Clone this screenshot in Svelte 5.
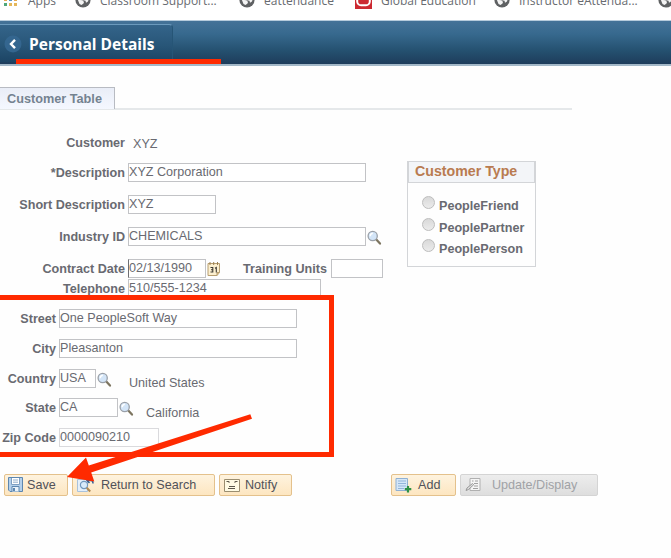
<script>
  const bookmarks = [
    { icon: 'globe', label: 'Classroom Support...', w: 164 },
    { icon: 'globe', label: 'eattendance', w: 116 },
    { icon: 'oracle', label: 'Global Education', w: 139 },
    { icon: 'globe', label: 'Instructor eAttenda...', w: 164 },
    { icon: 'globe', label: '', w: 20 }
  ];
  const details = [
    { label: '*Description', value: 'XYZ Corporation', w: 238, h: 32 },
    { label: 'Short Description', value: 'XYZ', w: 88, h: 32 },
    { label: 'Industry ID', value: 'CHEMICALS', w: 238, h: 32, look: true },
    { label: 'Contract Date', value: '02/13/1990', w: 78, h: 20, date: true },
    { label: 'Telephone', value: '510/555-1234', w: 193, h: 30, tight: true }
  ];
  const address = [
    { label: 'Street', value: 'One PeopleSoft Way', w: 238 },
    { label: 'City', value: 'Pleasanton', w: 238 },
    { label: 'Country', value: 'USA', w: 37, look: true, note: 'United States' },
    { label: 'State', value: 'CA', w: 59, look: true, note: 'California', wide: true },
    { label: 'Zip Code', value: '0000090210', w: 100, soft: true }
  ];
  const types = ['PeopleFriend', 'PeoplePartner', 'PeoplePerson'];
</script>

{#snippet lookup()}
  <svg class="look" width="15" height="16" viewBox="0 0 15 16">
    <path d="M9.300 9.500 13 13.600" stroke="#7d7560" stroke-width="2.200" stroke-linecap="round" />
    <circle cx="5.700" cy="6" r="4.600" fill="#d3e5f8" stroke="#9aa0a8" stroke-width="1.300" />
    <path d="M3.200 6.200A3 3 0 0 1 5.800 3.200" fill="none" stroke="#fff" stroke-width="1.400" />
  </svg>
{/snippet}

<main>
  <nav class="bookmarks">
    <div class="mark apps">
      <svg width="16" height="16" viewBox="0 0 16 16">
        <path fill="#e6a84e" d="M1 0h3v3H1zM1 6h3v3H1zM11 6h3v3h-3z" />
        <path fill="#4fa77a" d="M6 1h3v3H6zM1 11h3v3H1z" />
        <path fill="#5795cb" d="M11 1h3v3h-3zM6 6h3v3H6z" />
        <path fill="#e5b759" d="M6 11h3v3H6zM11 11h3v3h-3z" />
      </svg>
      <span>Apps</span>
    </div>
    {#each bookmarks as b}
      <div class="mark" style:width="{b.w}px">
        {#if b.icon === 'globe'}
          <svg width="16" height="16" viewBox="0 0 16 16">
            <circle cx="8" cy="8" r="7.600" fill="#5f6163" />
            <path d="M2 5.500 5 8l2.500.3L9 10l-.5 1.500L6.500 13 4.500 12l-1-2.500zM7.500 6l3-1.500 3.300 2.300-.8 2.700-2 1.300-.5-2-2.500-.6z" fill="#f4f4f4" />
          </svg>
        {:else}
          <svg width="17" height="17" viewBox="0 0 17 17">
            <rect width="17" height="17" fill="#cc2931" />
            <rect x="2.200" y="4.200" width="12.600" height="9" rx="3.800" fill="none" stroke="#fff" stroke-width="2" />
          </svg>
        {/if}
        <span>{b.label}</span>
      </div>
    {/each}
  </nav>

  <header>
    <div class="crumb">
      <svg width="18" height="18" viewBox="0 0 18 18">
        <circle cx="9" cy="9" r="8.500" fill="#34668f" />
        <path d="M11 4.800 7 9l4 4.200" fill="none" stroke="#fff" stroke-width="2.400" />
      </svg>
      <h1>Personal Details</h1>
    </div>
  </header>

  <div class="tabs"><div class="tab">Customer Table</div></div>

  <div class="content">
    <form class="details">
      <div class="row first"><span class="label">Customer</span><span class="plain">XYZ</span></div>
      {#each details as r}
        <div class="row" style:height="{r.h}px">
          <span class="label" class:tight={r.tight}>{r.label}</span>
          <div class="field" class:caret={r.date} style:width="{r.w}px">{r.value}</div>
          {#if r.look}{@render lookup()}{/if}
          {#if r.date}
            <svg class="cal" width="14" height="16" viewBox="0 0 14 16">
              <path d="M1 2.500h11.500v9L10 14.500H1z" fill="#fdf0cf" stroke="#b79e70" />
              <path d="M3 1v3M6.700 1v3M10.500 1v3" stroke="#9c8054" />
              <path d="M12.500 11.500H10v3" fill="#d9bd88" stroke="#b79e70" />
              <path d="M3.500 6.500h2.300V11H3.500M4 8.700h2M8 7.200l1.300-.7v5" fill="none" stroke="#3d3a35" stroke-width="1.100" />
            </svg>
            <span class="label units">Training Units</span>
            <div class="field" style:width="52px"></div>
          {/if}
        </div>
      {/each}
    </form>

    <section class="types">
      <h2>Customer Type</h2>
      {#each types as t}
        <div class="option"><i></i><span>{t}</span></div>
      {/each}
    </section>
  </div>

  <form class="address">
    {#each address as r}
      <div class="row">
        <span class="label">{r.label}</span>
        <div class="field" class:soft={r.soft} style:width="{r.w}px">{r.value}</div>
        {#if r.look}{@render lookup()}<span class="note" class:wide={r.wide}>{r.note}</span>{/if}
      </div>
    {/each}
  </form>

  <footer>
    <div class="btn save">
      <svg width="15" height="16" viewBox="0 0 15 16">
        <path d="M.5.5h14v14H2L.5 13z" fill="#b4d0eb" stroke="#5d87b0" />
        <path d="M3.500 1v6.500h8V1" fill="#fff" stroke="#7d9fc2" />
        <path d="M5 3h5M5 5.200h5" stroke="#8eacca" />
        <path d="M4 14.500v-5h7v5" fill="#eaf3fb" stroke="#5d87b0" /><path d="M5 11h2v3H5z" fill="#5d87b0" />
      </svg><span>Save</span>
    </div>
    <div class="btn return">
      <svg width="18" height="16" viewBox="0 0 18 16">
        <path d="M.5 2.500h10v12H.5z" fill="#e4effa" stroke="#a9c2dc" />
        <circle cx="7" cy="8" r="3.600" fill="#d8eafa" stroke="#7398bd" stroke-width="1.200" />
        <path d="m9.700 10.800 3.500 3.700" stroke="#b08a55" stroke-width="2" />
        <path d="M10 3.500h4q2 0 2 3M12.500 1 10 3.500 12.500 6" fill="none" stroke="#365f91" stroke-width="1.500" />
      </svg><span>Return to Search</span>
    </div>
    <div class="btn notify">
      <svg width="16" height="13" viewBox="0 0 16 13">
        <path d="M.5.500h15v12H.5z" fill="#fffbe4" stroke="#9b8e70" />
        <path d="M2.500 2.500h2l1 1M13.500 2.500h-2l-1 1M5 7.500h6M4 9.500h7" fill="none" stroke="#5d584c" stroke-width="1.100" />
      </svg><span>Notify</span>
    </div>
    <div class="btn add">
      <svg width="17" height="15" viewBox="0 0 17 15">
        <path d="M1 .5h11.500v12H1z" fill="#d5e7f8" stroke="#8fb0d3" />
        <path d="M3 3h8M3 5.500h8M3 8h8M3 10.500h6" stroke="#93b5da" />
        <path d="M13 8v6.500M9.800 11.200h6.500" stroke="#2f9145" stroke-width="2.200" />
      </svg><span>Add</span>
    </div>
    <div class="btn update">
      <svg width="16" height="14" viewBox="0 0 16 14">
        <path d="M5 .5h10v12H5z" fill="#f5f5f5" stroke="#b0b0b0" />
        <path d="M7 3h1.500M10 3h3M9 5.500h4M9 8h4M8 10.500h5" stroke="#a0a0a0" />
        <path d="m1 12.500 1-2.500 5.500-4.500 1.200 1.200L3.500 11.500z" fill="#ddd" stroke="#999" />
      </svg><span>Update/Display</span>
    </div>
  </footer>

  <svg class="marks" width="671" height="558" viewBox="0 0 671 558">
    <g fill="#ff2a00">
      <path d="M16 59h205v5H16z" />
      <path d="M0 295h334v162H0v-5h329V300H0z" />
      <path d="M67 477 86 457.500 88.800 465.600 250.300 414.200 252 418.800 91.200 472.500 94.300 481.500z" />
    </g>
  </svg>
</main>

<style>
  main { position: relative; width: 671px; height: 558px; overflow: hidden; background: #fefefe; font: 12.600px "Liberation Sans", Arial, sans-serif; color: #696a71; }
  svg { display: block; flex: none; }
  .bookmarks { height: 20px; display: flex; overflow: hidden; font: 12px/18px "Open Sans", sans-serif; color: #686b70; background: #fff; }
  .mark { height: 17px; display: flex; flex: none; gap: 9px; margin-top: -8px; white-space: nowrap; }
  .apps { width: 71px; padding-left: 3px; margin-right: 1px; }
  header { height: 46px; box-sizing: border-box; padding-top: 3px; border-top: 1px solid #b6cbdc; border-bottom: 2px solid #a3b8c8; background: linear-gradient(#447298, #37698e 30%, #24506f 70%, #1e3c5b); }
  .crumb { box-sizing: border-box; width: 173px; height: 38px; border-top: 1px solid #6b9abd; border-right: 1px solid #265576; border-radius: 0 4px 0 0; background: linear-gradient(#34648a, #285678 55%, #1c4464); display: flex; align-items: center; gap: 7px; padding-left: 4px; }
  h1 { margin: 0; font: bold 15.500px/20px "Open Sans", sans-serif; color: #fff; white-space: nowrap; }
  .tabs { width: 572px; height: 23px; margin-top: 21px; border-bottom: 2px solid #e5e8ea; box-sizing: border-box; }
  .tab { width: 115px; height: 22px; box-sizing: border-box; border: solid #b8bbc2; border-width: 1px 1px 0 0; background: linear-gradient(#e9edf7, #f5f8ff); font-weight: bold; font-size: 12.700px; line-height: 22px; padding-left: 7px; color: #748290; }
  .content { display: flex; height: 186px; overflow: hidden; }
  .details { width: 407px; padding-top: 23px; flex: none; }
  .row { display: flex; white-space: nowrap; }
  .label { width: 125px; flex: none; text-align: right; font-weight: bold; margin-right: 3px; line-height: 21px; }
  .tight { line-height: 20px; }
  .first { height: 30px; line-height: 22px; }
  .first .label { line-height: 20px; }
  .plain { margin-left: 5px; }
  .field { box-sizing: border-box; flex: none; height: 19px; border: 1px solid #c2c3c6; background: #fff; line-height: 17px; }
  .caret { border-left-color: #6e6f73; }
  .look { margin: 3px 0 0 1px; }
  .cal { margin: 2px 0 0 1px; }
  .units { width: 106px; margin-right: 4px; }
  .types { box-sizing: border-box; width: 129px; height: 106px; margin-top: 51px; border: 1px solid #d3d5d8; }
  h2 { margin: 0 0 9px; height: 20px; border: solid #d3d5d8; border-width: 0 1px 1px; background: #f3f5f8; font: bold 14.200px/19px "Liberation Sans", Arial, sans-serif; color: #b97b50; padding-left: 6px; }
  .option { display: flex; height: 21.500px; gap: 5px; padding-left: 14px; font-weight: bold; }
  .option i { box-sizing: border-box; width: 13px; height: 13px; border: 1px solid #bdbdbd; border-radius: 50%; background: linear-gradient(#d9d9d9, #ebebeb); margin-top: 4px; margin-left: -.5px; flex: none; }
  .option span { line-height: 28px; margin-left: -.5px; }
  .address { margin-top: 13px; height: 165px; }
  .address .row { height: 29.800px; }
  .address .label { width: 56px; line-height: 21px; }
  .note { margin-left: 17px; line-height: 29px; }
  .wide { margin-left: 12px; line-height: 30px; }
  .soft { border-color: #dadadd; }
  footer { display: flex; gap: 4px; padding-left: 4px; }
  .btn { box-sizing: border-box; height: 22px; border: 1px solid #e4c18c; border-radius: 2px; background: linear-gradient(#fef3df, #fde6c1); display: flex; align-items: center; gap: 4px; padding-left: 3px; color: #515259; white-space: nowrap; }
  .save { width: 64px; }
  .return { width: 143px; padding-left: 4px; gap: 6px; }
  .notify { width: 73px; padding-left: 4px; gap: 5px; }
  .add { width: 65px; margin-left: 95px; gap: 6px; }
  .update { width: 138px; border-color: #d4d4d4; background: linear-gradient(#ededed, #dedede); color: #a0a2a6; gap: 11px; padding-left: 4px; }
  .marks { position: absolute; inset: 0; pointer-events: none; }
</style>
